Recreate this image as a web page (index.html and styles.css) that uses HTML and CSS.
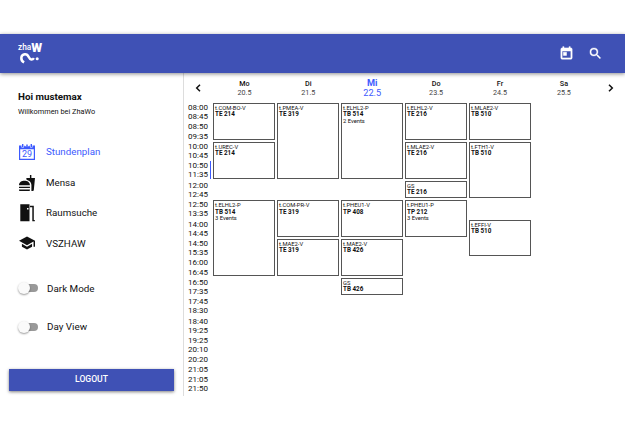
FILE: index.html
```
<!DOCTYPE html>
<html lang="de">
<head>
<meta charset="utf-8">
<title>ZhaWo</title>
<link rel="stylesheet" href="styles.css">
</head>
<body>
<header class="topbar">
  <div class="logo">
    <div class="logo-name"><span class="logo-zha">zha</span><span class="logo-w">W</span></div>
    <svg class="logo-mark" viewBox="0 0 20 11"><path d="M4.600 9.600C.9 7.600 1.300 2.600 5.200 2.100C9.400 1.600 8.200 6.600 11.200 6.900Q12.600 7 13.600 5.600" fill="none" stroke="#fff" stroke-width="2.300"/><circle cx="16.600" cy="6.200" r="1.400" fill="#fff"/></svg>
  </div>
  <nav class="actions">
    <svg viewBox="0 0 24 24"><path d="M19 3h-1V1h-2v2H8V1H6v2H5c-1.100 0-2 .9-2 2v14c0 1.100.9 2 2 2h14c1.100 0 2-.9 2-2V5c0-1.100-.9-2-2-2zm0 16H5V8h14v11zM7 10h5v5H7z" stroke="currentColor" stroke-width=".8"/></svg>
    <svg viewBox="0 0 24 24"><path d="M15.500 14h-.79l-.28-.27A6.470 6.470 0 0 0 16 9.500 6.500 6.500 0 1 0 9.500 16c1.610 0 3.090-.59 4.230-1.570l.27.28v.79l5 4.990L20.490 19l-4.990-5zm-6 0C7.010 14 5 11.990 5 9.500S7.010 5 9.500 5 14 7.010 14 9.500 11.990 14 9.500 14z" stroke="currentColor" stroke-width=".5"/></svg>
  </nav>
</header>
<div class="page">
  <aside class="sidebar">
    <h1>Hoi mustemax</h1>
    <p class="welcome">Willkommen bei ZhaWo</p>
    <ul class="menu">
      <li class="active"><svg viewBox="0 0 16 16"><path d="M0 1.500h16V16H0zM1.200 5.300v9.500h13.600V5.300z" fill-rule="evenodd"/><path d="M3.700 0v3.400M12.300 0v3.400M6.600 .8v1.500M9.400 .8v1.500" stroke="#fff" stroke-width="2.400"/><path d="M3.700 0v3M12.300 0v3M8 .4v1.500" stroke="currentColor" stroke-width="1.400"/><text x="8" y="13.200" text-anchor="middle">29</text></svg>Stundenplan</li>
      <li><svg viewBox="1 1 22 22"><path d="M18.060 22.990h1.660c.84 0 1.530-.64 1.630-1.460L23 5.050h-5V1h-1.970v4.050h-4.970l.3 2.340c1.710.47 3.310 1.320 4.270 2.260 1.440 1.420 2.430 2.890 2.430 5.290v8.050zM1 21.990V21h15.030v.99c0 .55-.45 1-1.010 1H2.010c-.56 0-1.010-.45-1.010-1zm15.030-7c0-8-15.030-8-15.030 0h15.030zM1.020 17h15v2h-15z"/></svg>Mensa</li>
      <li><svg viewBox="0 0 16 18"><path d="M1.300.3h9.200v16.900H1.300zM8 4.100v1.500h1.500V4.100zM11 1.800h3.800v14.100h1v1.300h-2.500V3.200H11z" fill-rule="evenodd"/></svg>Raumsuche</li>
      <li><svg viewBox="1 1 22 22"><path d="M5 13.180v4L12 21l7-3.820v-4L12 17l-7-3.820zM12 3L1 9l11 6 9-4.910V17h2V9L12 3z"/></svg>VSZHAW</li>
    </ul>
    <div class="toggle"><span class="switch"></span>Dark Mode</div>
    <div class="toggle"><span class="switch"></span>Day View</div>
    <button class="logout">LOGOUT</button>
  </aside>
  <main class="schedule">
    <div class="days">
      <svg class="arrow" viewBox="0 0 6 8"><path d="M5 .8L1.700 4L5 7.200"/></svg>
      <div><b>Mo</b><span>20.5</span></div>
      <div><b>Di</b><span>21.5</span></div>
      <div class="today"><b>Mi</b><span>22.5</span></div>
      <div><b>Do</b><span>23.5</span></div>
      <div><b>Fr</b><span>24.5</span></div>
      <div><b>Sa</b><span>25.5</span></div>
      <svg class="arrow" viewBox="0 0 6 8"><path d="M1 .8L4.300 4L1 7.200"/></svg>
    </div>
    <div class="body">
      <div class="times">
        <div>08:00<br>08:45</div><div>08:50<br>09:35</div><div>10:00<br>10:45</div><div class="now">10:50<br>11:35</div><div>12:00<br>12:45</div><div>12:50<br>13:35</div><div>14:00<br>14:45</div><div>14:50<br>15:35</div><div>16:00<br>16:45</div><div>16:50<br>17:35</div><div>17:45<br>18:30</div><div>18:40<br>19:25</div><div>19:25<br>20:10</div><div>20:20<br>21:05</div><div>21:05<br>21:50</div>
      </div>
      <div class="events">
        <div class="event mo s1 l2">t.COM-BO-V<b>TE 214</b></div>
        <div class="event mo s3 l2">t.UREC-V<b>TE 214</b></div>
        <div class="event mo s6 l4">t.ELHL2-P<b>TB 514</b>3 Events</div>
        <div class="event di s1 l4">t.PMEA-V<b>TE 319</b></div>
        <div class="event di s6 l2">t.COM-PR-V<b>TE 319</b></div>
        <div class="event di s8 l2">t.MAE2-V<b>TE 319</b></div>
        <div class="event mi s1 l4">t.ELHL2-P<b>TB 514</b>2 Events</div>
        <div class="event mi s6 l2">t.PHEU1-V<b>TP 408</b></div>
        <div class="event mi s8 l2">t.MAE2-V<b>TB 426</b></div>
        <div class="event mi s10 l1">GS<b>TB 426</b></div>
        <div class="event do s1 l2">t.ELHL2-V<b>TE 216</b></div>
        <div class="event do s3 l2">t.MLAE2-V<b>TE 216</b></div>
        <div class="event do s5 l1">GS<b>TE 216</b></div>
        <div class="event do s6 l2">t.PHEU1-P<b>TP 212</b>3 Events</div>
        <div class="event fr s1 l2">t.MLAE2-V<b>TB 510</b></div>
        <div class="event fr s3 l3">t.FTH1-V<b>TB 510</b></div>
        <div class="event fr s7 l2">t.EFFI-V<b>TB 510</b></div>
      </div>
    </div>
  </main>
</div>
</body>
</html>
```
FILE: styles.css
```
* { box-sizing: border-box; }
body { margin: 0; padding-top: 34px; width: 625px; height: 448px; overflow: hidden; background: #fff; color: #111; font-family: Roboto, sans-serif; }
svg { display: block; fill: currentColor; flex: none; }
.topbar { position: relative; z-index: 1; height: 39px; padding: 0 22px 0 18px; background: #3f51b5; color: #fff; display: flex; justify-content: space-between; box-shadow: 0 1px 4px rgba(0,0,0,.45); }
.logo { padding-top: 7px; }
.logo-name { height: 11px; display: flex; font-weight: 700; line-height: 13px; }
.logo-zha { font-size: 8.300px; font-weight: 500; }
.logo-w { font-size: 12.500px; font-weight: 900; line-height: 14px; }
.logo-mark { width: 22px; height: 12px; margin-left: 1px; }
.actions { display: flex; align-items: center; gap: 14px; }
.actions svg { width: 15px; height: 15px; }
.page { display: flex; height: 323px; }
.sidebar { width: 184px; border-right: 1px solid #ddd; padding: 17px 9px 0; }
h1 { margin: 0 0 0 9px; font-size: 9.800px; line-height: 13px; font-weight: 700; }
.welcome { margin: 3px 0 0 9px; font-size: 7.350px; line-height: 12px; }
.menu { list-style: none; margin: 19px 0 0 9px; padding: 0; }
.menu li { height: 30.400px; display: flex; align-items: center; gap: 10px; font-size: 9.750px; }
.menu svg { width: 18px; height: 16px; color: #111; }
.menu li:first-child { padding-bottom: 1px; }
.menu li:nth-child(3) svg { height: 18px; }
.menu .active, .menu .active svg { color: #3d5afe; }
.menu text { font-size: 9px; }
.toggle { margin-left: 9px; height: 38.300px; display: flex; align-items: center; font-size: 9.850px; gap: 9px; }
.menu + .toggle { margin-top: 10.500px; }
.switch { position: relative; width: 20px; height: 8px; border-radius: 4px; background: linear-gradient(to right, transparent 4px, #999 4px); }
.switch::before { content: ""; position: absolute; left: -.5px; top: -2px; width: 12px; height: 12px; border-radius: 50%; background: #fafafa; box-shadow: 0 1px 2px rgba(0,0,0,.4); }
.logout { display: block; width: 165px; height: 22px; margin-top: 23.500px; padding: 0 0 2px; border: 0; background: #3f51b5; color: #fff; font: 500 8.600px/20px Roboto, sans-serif; box-shadow: 0 1px 3px rgba(0,0,0,.5); }
.schedule { flex: 1; }
.days { height: 29px; display: grid; grid-template-columns: 28.500px repeat(6, 63.900px) 28px; text-align: center; font-size: 7.200px; line-height: 9px; padding-top: 6px; }
.days b { display: block; font-weight: 500; }
.days span { display: block; font-weight: 400; color: #444; }
.days .today { color: #3d5afe; font-size: 9.200px; line-height: 10px; margin-top: -1px; }
.days .today b { font-weight: 700; }
.days .today span { color: inherit; }
.arrow { width: 6px; height: 8px; margin: 5px 0 0 10.500px; fill: none; stroke: #111; stroke-width: 1.500; }
.days .arrow:last-child { margin-left: 12px; }
.body { display: flex; padding-top: 1px; }
.times { width: 29px; font-size: 8px; line-height: 9.200px; padding-left: 4px; }
.times div { height: 19.430px; }
.times .now { border-right: 1px solid #3d5afe; width: 23px; height: 17.430px; margin-bottom: 2px; }
.events { display: grid; grid-template-columns: repeat(5, 62px); grid-template-rows: repeat(15, 17.430px); gap: 2px; }
.event { border: 1px solid #555; padding: 1.200px 0 0 1px; font-size: 5.800px; line-height: 6.300px; overflow: hidden; white-space: nowrap; }
.event b { display: block; font-size: 6.300px; font-weight: 700; }
.mo { grid-column: 1; } .di { grid-column: 2; } .mi { grid-column: 3; } .do { grid-column: 4; } .fr { grid-column: 5; }
.s1 { grid-row-start: 1; } .s3 { grid-row-start: 3; } .s5 { grid-row-start: 5; } .s6 { grid-row-start: 6; } .s7 { grid-row-start: 7; } .s8 { grid-row-start: 8; } .s10 { grid-row-start: 10; }
.l1 { grid-row-end: span 1; } .l2 { grid-row-end: span 2; } .l3 { grid-row-end: span 3; } .l4 { grid-row-end: span 4; }
```
